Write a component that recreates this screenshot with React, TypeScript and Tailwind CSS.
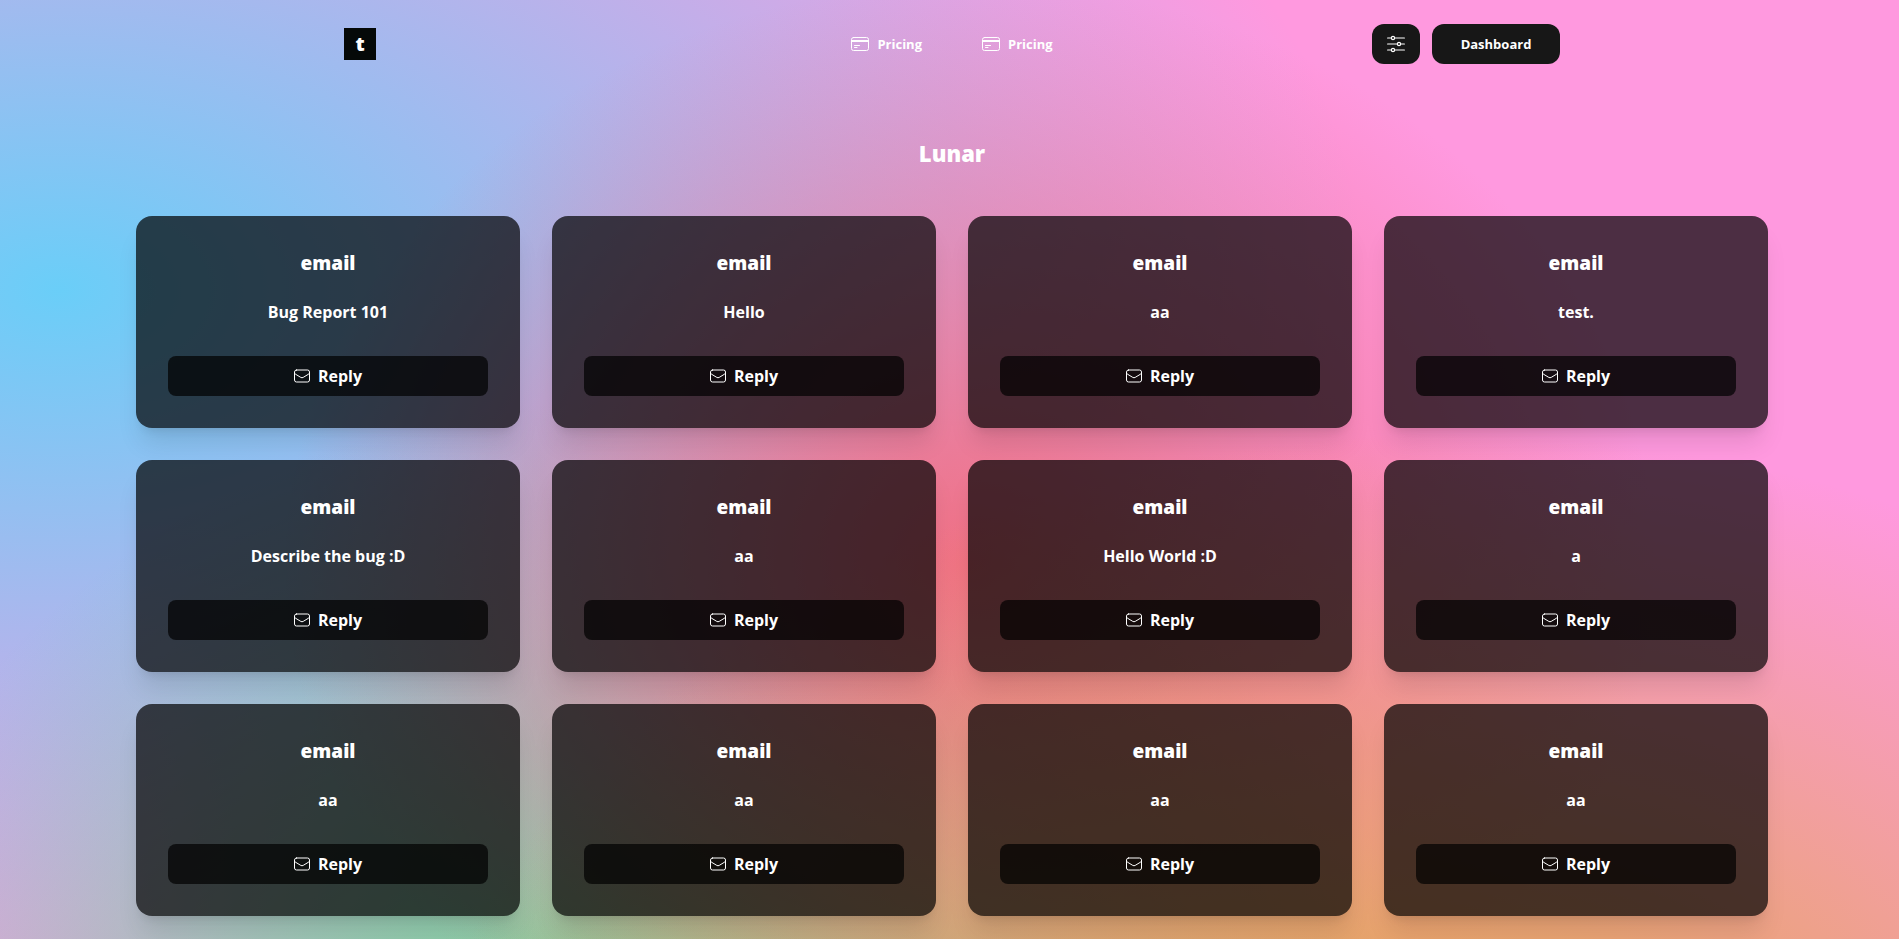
const messages = [
  "Bug Report 101", "Hello", "aa", "test.",
  "Describe the bug :D", "aa", "Hello World :D", "a",
  "aa", "aa", "aa", "aa",
];

function CardIcon() {
  return (
    <svg width="18" height="18" viewBox="0 0 18 18" fill="none" stroke="currentColor" strokeWidth="1" strokeLinecap="round" strokeLinejoin="round" aria-hidden="true">
      <rect x="0.5" y="2.5" width="17" height="13" rx="2" />
      <path d="M0.5 5.5h17M0.5 6.5h17M3.5 10.5h5M3.5 12.5h2.5" />
    </svg>
  );
}

function SlidersIcon() {
  return (
    <svg width="18" height="18" viewBox="0 0 18 18" fill="none" stroke="currentColor" strokeWidth="1.2" strokeLinecap="round" aria-hidden="true">
      <path d="M0.6 3h3.6M7.8 3h9.6M0.6 9h9.6M13.8 9h3.6M0.6 15h3.6M7.8 15h9.6" />
      <circle cx="6" cy="3" r="1.6" />
      <circle cx="12" cy="9" r="1.6" />
      <circle cx="6" cy="15" r="1.6" />
    </svg>
  );
}

function MailIcon() {
  return (
    <svg width="16" height="16" viewBox="0 0 16 16" fill="none" stroke="currentColor" strokeWidth="1" strokeLinecap="round" strokeLinejoin="round" aria-hidden="true">
      <rect x="0.5" y="2" width="15" height="12" rx="2" />
      <path d="M0.5 4.5v0.3a1.5 1.5 0 0 0 0.7 1.2l5.6 3.4a2.3 2.3 0 0 0 2.4 0l5.6-3.4a1.5 1.5 0 0 0 0.7-1.2v-0.3" />
    </svg>
  );
}

function NavItem() {
  return (
    <a href="#pricing" className="flex items-center gap-2 text-[13px] leading-5 font-bold">
      <CardIcon />
      Pricing
    </a>
  );
}

function MessageCard({ text }: { text: string }) {
  return (
    <article className="flex flex-col rounded-2xl bg-black/70 p-8 text-center shadow-xl">
      <h2 className="text-[19px] leading-[30px] font-extrabold">email</h2>
      <p className="mt-[22px] text-base leading-6 font-bold">{text}</p>
      <button type="button" className="mt-8 flex h-10 items-center justify-center gap-2 rounded-lg bg-black/70 font-bold">
        <MailIcon />
        Reply
      </button>
    </article>
  );
}

const mesh =
  "bg-[#ff99df] bg-[radial-gradient(ellipse_1030px_720px_at_1450px_1153px,#dfa840,transparent),radial-gradient(ellipse_686px_583px_at_970px_565px,#f17085,transparent),radial-gradient(ellipse_850px_820px_at_620px_1219px,#4fe885,transparent),radial-gradient(ellipse_1306px_780px_at_60px_290px,#6acef8,transparent)]";

export default function App() {
  return (
    <div className={`h-screen overflow-hidden pl-[5px] font-['Open_Sans',sans-serif] text-white ${mesh}`}>
      <header className="mx-auto grid max-w-7xl grid-cols-[1fr_auto_1fr] items-center px-8 pt-6">
        <a href="#home" aria-label="Home" className="flex size-8 items-center justify-center bg-[#050908] text-xl leading-none font-extrabold">
          t
        </a>
        <nav className="flex gap-[60px]">
          <NavItem />
          <NavItem />
        </nav>
        <div className="flex justify-end gap-3">
          <button type="button" aria-label="Settings" className="flex h-10 w-12 items-center justify-center rounded-xl bg-[#171717]">
            <SlidersIcon />
          </button>
          <button type="button" className="h-10 w-32 rounded-xl bg-[#171717] text-[13px] leading-5 font-bold">
            Dashboard
          </button>
        </div>
      </header>
      <main className="mx-auto max-w-[1696px] px-8">
        <h1 className="pt-[73px] text-center text-[22px] leading-8 font-extrabold">Lunar</h1>
        <div className="mt-[47px] grid grid-cols-4 gap-8">
          {messages.map((text, i) => (
            <MessageCard key={i} text={text} />
          ))}
        </div>
      </main>
    </div>
  );
}
